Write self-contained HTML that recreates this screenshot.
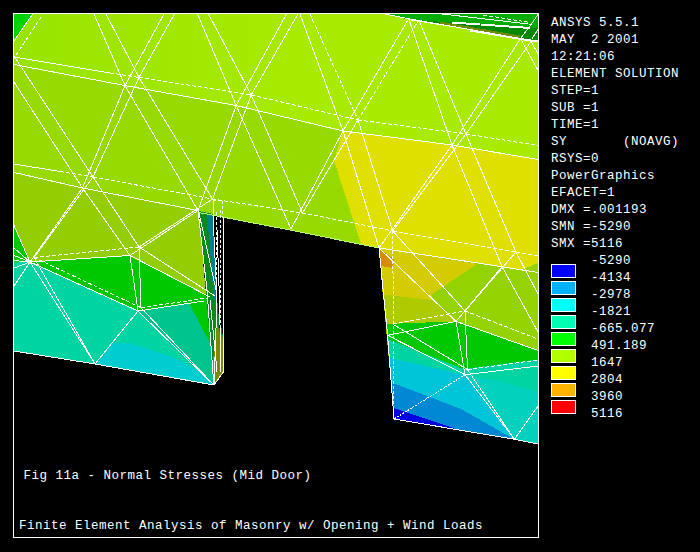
<!DOCTYPE html><html><head><meta charset="utf-8"><title>ANSYS plot</title>
<style>html,body{margin:0;padding:0;background:#000;}body{width:700px;height:552px;overflow:hidden;}svg{display:block}text{font-family:"Liberation Mono",monospace;font-size:12.5px;letter-spacing:0.5px;fill:#fff;white-space:pre}</style></head><body>
<svg width="700" height="552" viewBox="0 0 700 552">
<rect width="700" height="552" fill="#000"/>
<defs><clipPath id="c"><rect x="14" y="14" width="524" height="523"/></clipPath><linearGradient id="gT" gradientUnits="userSpaceOnUse" x1="14" y1="0" x2="300" y2="0"><stop offset="0" stop-color="#98e400"/><stop offset="1" stop-color="#a8ea00"/></linearGradient></defs>
<g clip-path="url(#c)" shape-rendering="crispEdges">
<polygon fill="url(#gT)" points="13,13 538,13 538,160 452,145 343,131 236,105 125,86 13,64"/>
<polygon fill="#96da00" points="13,64 125,86 236,105 343,131 452,145 538,160 538,273 379,248 198.8,212.5 198,210.5 13,172"/>
<polygon fill="#92ce02" points="13,172 198,210.5 198.8,212.5 213.8,385 95,364 13,351"/>
<polygon fill="#94d200" points="379,248 538,272 538,444.2 514.4,439.3 394,419"/>
<polygon fill="#e0e000" points="343,131 452,145 538,160 538,273 379,248 361.5,244.6 352.6,218 334,160.6"/>
<polygon fill="#d4cc00" points="379,248 477,264 431.6,294.4 432.5,300 382.7,294.4"/>
<polygon fill="#94d200" points="522,269.8 538,263 538,273"/>
<polygon fill="#d68c00" points="379,249 394,259 393,268 381,266"/>
<polygon fill="#008800" points="383,13 538,13 538,41 408,19.5"/>
<polygon fill="#00ac00" points="383,13 538,13 538,28 530,27.5 452,22.5 408,19.5"/>
<polygon fill="#6e8c00" points="440,21.5 520,35.5 520,38.5 440,24.5"/>
<polygon fill="#00d400" points="13,13 33,13 13,41.5"/>
<polygon fill="#00c800" points="13,225 30,262 13,300"/>
<polygon fill="#00c800" points="30,262 129,256 210,297 213,355 138,311"/>
<polygon fill="#00d4a2" points="13,262 30,262 138,311 189,303 213,355 213.8,385 95,364 13,351"/>
<polygon fill="#00c48e" points="138,311 189,303 211,345 213.8,385"/>
<polygon fill="#00cdd0" points="95,364 113,343 130,343 177,359 197,370 213.8,385"/>
<polygon fill="#aecb00" points="382.7,294.4 432.5,300 457,320.6 387.2,324.3"/>
<polygon fill="#00c800" points="386.3,324 456,321.4 538,350 538,444.2 514.4,439.3 394,419"/>
<polygon fill="#00d4a2" points="387.6,339 463,369 538,359.5 538,444.2 514.4,439.3 394,419"/>
<polygon fill="#00c4d8" points="390,358 465,375 500,381 538,398 538,444.2 514.4,439.3 394,419"/>
<polygon fill="#00d2be" points="465,375 538,366 538,444.2 514.4,439.3"/>
<polygon fill="#00d4a2" points="463,369 538,359.5 538,392 500,381 465,375"/>
<polygon fill="#0088d4" points="390.5,382 461,409 514.4,439.3 394,419"/>
<polygon fill="#0000e0" points="392.7,407.6 453.5,428 453.5,429.1 394,419"/>
<polygon fill="#0a8a1e" points="199,211 213,214 217,300 223.5,340 223.5,372 214,386"/>
<polygon fill="#007e8c" points="207,214.2 212.5,215 217,300 214,300"/>
<polygon fill="#000" points="214,216 223.5,217.5 223.5,300 220,335 217.5,300"/>
<polygon fill="#7a8a00" points="217,325 223.5,340 223.5,372 214,386 213,360"/>
<g stroke="#fff" stroke-width="1" fill="none">
<line x1="14" y1="64.5" x2="125" y2="85.6"/>
<line x1="125" y1="85.6" x2="236.2" y2="105.5"/>
<line x1="236.2" y1="105.5" x2="343" y2="131"/>
<line x1="343" y1="131" x2="452" y2="145"/>
<line x1="452" y1="145" x2="538" y2="159.5"/>
<line x1="14" y1="57" x2="110" y2="73"/>
<line x1="110" y1="73" x2="139" y2="77.4" stroke-dasharray="4 2"/>
<line x1="139" y1="77.4" x2="251.2" y2="94.9" stroke-dasharray="4 2"/>
<line x1="251.2" y1="94.9" x2="358" y2="120" stroke-dasharray="4 2"/>
<line x1="358" y1="120" x2="466" y2="134" stroke-dasharray="4 2"/>
<line x1="466" y1="134" x2="538" y2="145.5" stroke-dasharray="4 2"/>
<line x1="14" y1="172.5" x2="82.5" y2="188"/>
<line x1="82.5" y1="188" x2="198" y2="210.5"/>
<line x1="198.8" y1="212.5" x2="291" y2="230.2" stroke="#b4ff78"/>
<line x1="291" y1="230.2" x2="379" y2="248" stroke="#b4ff78"/>
<line x1="379" y1="248" x2="502" y2="266.7"/>
<line x1="502" y1="266.7" x2="538" y2="272.5"/>
<line x1="14" y1="164" x2="60" y2="171.5"/>
<line x1="60" y1="171.5" x2="93" y2="177" stroke-dasharray="4 2"/>
<line x1="93" y1="177" x2="212.5" y2="199" stroke-dasharray="4 2"/>
<line x1="212.5" y1="199" x2="302.5" y2="213" stroke-dasharray="4 2"/>
<line x1="302.5" y1="213" x2="392.7" y2="231" stroke-dasharray="4 2"/>
<line x1="392.7" y1="231" x2="515.9" y2="252" stroke-dasharray="4 2"/>
<line x1="515.9" y1="252" x2="538" y2="256" stroke-dasharray="4 2"/>
<line x1="94" y1="14" x2="125" y2="85.6"/>
<line x1="125" y1="85.6" x2="164" y2="14"/>
<line x1="197.5" y1="14" x2="236.2" y2="105.5"/>
<line x1="236.2" y1="105.5" x2="286.5" y2="14"/>
<line x1="300" y1="14" x2="343" y2="131"/>
<line x1="343" y1="131" x2="408.7" y2="18.7"/>
<line x1="408.7" y1="18.7" x2="452" y2="145"/>
<line x1="452" y1="145" x2="520.5" y2="38.5"/>
<line x1="106" y1="14" x2="139" y2="77.4"/>
<line x1="139" y1="77.4" x2="174.5" y2="14"/>
<line x1="208.5" y1="14" x2="251.2" y2="94.9"/>
<line x1="251.2" y1="94.9" x2="298" y2="14"/>
<line x1="310" y1="14" x2="358" y2="120" stroke-dasharray="4 2"/>
<line x1="358" y1="120" x2="418.8" y2="20" stroke-dasharray="4 2"/>
<line x1="418.8" y1="20" x2="466" y2="134"/>
<line x1="466" y1="134" x2="531" y2="41.5"/>
<line x1="14" y1="41" x2="33" y2="13.5"/>
<line x1="16" y1="55" x2="42.5" y2="15" stroke-dasharray="4 2"/>
<line x1="383" y1="13.5" x2="408.7" y2="18.7"/>
<line x1="408.7" y1="18.7" x2="520.5" y2="38.5"/>
<line x1="520.5" y1="38.5" x2="538" y2="41"/>
<line x1="470" y1="30.5" x2="520.5" y2="38.5"/>
<line x1="520.5" y1="38.5" x2="538" y2="41.5"/>
<line x1="470" y1="31" x2="520.5" y2="39.5"/>
<line x1="520.5" y1="39.5" x2="538" y2="42"/>
<line x1="408" y1="19.5" x2="452" y2="26.5"/>
<line x1="438" y1="13.5" x2="531" y2="24.3"/>
<line x1="452" y1="22" x2="530" y2="27.5"/>
<line x1="452" y1="23" x2="530" y2="28.5"/>
<line x1="483" y1="15" x2="530" y2="22.5" stroke-dasharray="4 2"/>
<line x1="520.5" y1="38.5" x2="530.7" y2="25.2"/>
<line x1="530.7" y1="25.2" x2="538.3" y2="13.8"/>
<line x1="520.5" y1="38.5" x2="538.3" y2="70.8"/>
<line x1="531" y1="41.5" x2="538.3" y2="54.4"/>
<line x1="532" y1="38.5" x2="538.3" y2="29"/>
<line x1="14" y1="82" x2="82.5" y2="188"/>
<line x1="82.5" y1="188" x2="125" y2="85.6"/>
<line x1="125" y1="85.6" x2="198" y2="210.5"/>
<line x1="198" y1="210.5" x2="236.2" y2="105.5"/>
<line x1="236.2" y1="105.5" x2="291" y2="229"/>
<line x1="291" y1="229" x2="343" y2="131"/>
<line x1="343" y1="131" x2="379" y2="248"/>
<line x1="379" y1="248" x2="452" y2="145"/>
<line x1="452" y1="145" x2="502" y2="266.7"/>
<line x1="14" y1="56" x2="93" y2="177"/>
<line x1="93" y1="177" x2="139" y2="77.4"/>
<line x1="139" y1="77.4" x2="212.5" y2="199"/>
<line x1="212.5" y1="199" x2="251.2" y2="94.9"/>
<line x1="251.2" y1="94.9" x2="302.5" y2="213"/>
<line x1="302.5" y1="213" x2="358" y2="120"/>
<line x1="358" y1="120" x2="392.7" y2="231"/>
<line x1="392.7" y1="231" x2="466" y2="134"/>
<line x1="466" y1="134" x2="515.9" y2="252"/>
<line x1="82.5" y1="188" x2="30" y2="262"/>
<line x1="93" y1="177" x2="34" y2="257.5"/>
<line x1="82.5" y1="188" x2="130" y2="255.5"/>
<line x1="93" y1="177" x2="139" y2="247"/>
<line x1="30" y1="262" x2="130" y2="255.5"/>
<line x1="34" y1="257.5" x2="139" y2="247" stroke-dasharray="4 2"/>
<line x1="130" y1="255.5" x2="198" y2="210.5"/>
<line x1="139" y1="247" x2="212.5" y2="199"/>
<line x1="130" y1="255.5" x2="210" y2="297"/>
<line x1="139" y1="247" x2="215" y2="296"/>
<line x1="130" y1="255.5" x2="138" y2="311"/>
<line x1="139" y1="247" x2="141" y2="307.7"/>
<line x1="30" y1="262" x2="14" y2="225.5"/>
<line x1="30" y1="262" x2="14" y2="248"/>
<line x1="30" y1="262" x2="14" y2="255.5"/>
<line x1="30" y1="262" x2="14" y2="260.5"/>
<line x1="30" y1="262" x2="14" y2="268"/>
<line x1="30" y1="262" x2="14" y2="286"/>
<line x1="30" y1="262" x2="95" y2="364"/>
<line x1="34" y1="257.5" x2="95" y2="364"/>
<line x1="95" y1="364" x2="138" y2="311"/>
<line x1="138" y1="311" x2="213.8" y2="385"/>
<line x1="141" y1="307.7" x2="213.8" y2="385"/>
<line x1="30" y1="262" x2="138" y2="311"/>
<line x1="34" y1="257.5" x2="141" y2="307.7" stroke-dasharray="4 2"/>
<line x1="138" y1="311" x2="204" y2="301"/>
<line x1="141" y1="307.7" x2="207" y2="298" stroke-dasharray="4 2"/>
<line x1="14" y1="351" x2="95" y2="364"/>
<line x1="95" y1="364" x2="213.8" y2="385"/>
<line x1="213.8" y1="385" x2="223.5" y2="372"/>
<line x1="223.5" y1="372" x2="223.5" y2="217"/>
<line x1="198" y1="210.5" x2="207" y2="290"/>
<line x1="207" y1="290" x2="213.8" y2="385"/>
<line x1="213" y1="200" x2="213" y2="215"/>
<line x1="213" y1="215" x2="217" y2="300"/>
<line x1="217" y1="300" x2="214" y2="386"/>
<line x1="220.5" y1="210" x2="220.5" y2="372" stroke-dasharray="3 2"/>
<line x1="213" y1="200" x2="222.7" y2="201" stroke-dasharray="3 2"/>
<line x1="222.7" y1="201" x2="223" y2="217" stroke-dasharray="3 2"/>
<line x1="198.8" y1="212.5" x2="217" y2="294"/>
<line x1="216.2" y1="212" x2="216.2" y2="300" stroke-dasharray="3 2"/>
<line x1="217" y1="230" x2="219.5" y2="300"/>
<line x1="219.5" y1="300" x2="221" y2="372"/>
<line x1="210" y1="300" x2="214" y2="340"/>
<line x1="214" y1="340" x2="217" y2="372"/>
<line x1="379" y1="248" x2="387.6" y2="335.4"/>
<line x1="387.6" y1="335.4" x2="394" y2="419"/>
<line x1="394" y1="419" x2="514.4" y2="439.3"/>
<line x1="514.4" y1="439.3" x2="538" y2="444"/>
<line x1="392.7" y1="231" x2="394" y2="408" stroke-dasharray="3 2"/>
<line x1="387.6" y1="335.4" x2="456" y2="321.4"/>
<line x1="392.7" y1="324" x2="465" y2="311" stroke-dasharray="4 2"/>
<line x1="387.6" y1="335.4" x2="465" y2="374.7"/>
<line x1="392.7" y1="324" x2="467.5" y2="369.6"/>
<line x1="456" y1="321.4" x2="465" y2="374.7"/>
<line x1="465" y1="311" x2="467.5" y2="369.6"/>
<line x1="465" y1="374.7" x2="394" y2="419" stroke-dasharray="2 1"/>
<line x1="465" y1="374.7" x2="514.4" y2="439.3"/>
<line x1="467.5" y1="369.6" x2="514.4" y2="439.3"/>
<line x1="465" y1="374.7" x2="538" y2="366"/>
<line x1="467.5" y1="369.6" x2="538" y2="360" stroke-dasharray="4 2"/>
<line x1="456" y1="321.4" x2="538" y2="350.5"/>
<line x1="465" y1="311" x2="538" y2="339" stroke-dasharray="4 2"/>
<line x1="379" y1="248" x2="456" y2="321.4"/>
<line x1="392.7" y1="231" x2="465" y2="311"/>
<line x1="502" y1="266.7" x2="456" y2="321.4"/>
<line x1="515.9" y1="252" x2="465" y2="311"/>
<line x1="502" y1="266.7" x2="538" y2="332"/>
<line x1="515.9" y1="252" x2="538" y2="294"/>
<line x1="514.4" y1="439.3" x2="538" y2="406"/>
</g></g>
<rect x="13.5" y="13.5" width="525" height="524" fill="none" stroke="#fff" stroke-width="1" shape-rendering="crispEdges"/>
<text x="551" y="26" xml:space="preserve">ANSYS 5.5.1</text>
<text x="551" y="43" xml:space="preserve">MAY  2 2001</text>
<text x="551" y="60" xml:space="preserve">12:21:06</text>
<text x="551" y="77" xml:space="preserve">ELEMENT SOLUTION</text>
<text x="551" y="94" xml:space="preserve">STEP=1</text>
<text x="551" y="111" xml:space="preserve">SUB =1</text>
<text x="551" y="128" xml:space="preserve">TIME=1</text>
<text x="551" y="145" xml:space="preserve">SY       (NOAVG)</text>
<text x="551" y="162" xml:space="preserve">RSYS=0</text>
<text x="551" y="179" xml:space="preserve">PowerGraphics</text>
<text x="551" y="196" xml:space="preserve">EFACET=1</text>
<text x="551" y="213" xml:space="preserve">DMX =.001193</text>
<text x="551" y="230" xml:space="preserve">SMN =-5290</text>
<text x="551" y="247" xml:space="preserve">SMX =5116</text>
<text x="551" y="264" xml:space="preserve">     -5290</text>
<text x="551" y="281" xml:space="preserve">     -4134</text>
<text x="551" y="298" xml:space="preserve">     -2978</text>
<text x="551" y="315" xml:space="preserve">     -1821</text>
<text x="551" y="332" xml:space="preserve">     -665.077</text>
<text x="551" y="349" xml:space="preserve">     491.189</text>
<text x="551" y="366" xml:space="preserve">     1647</text>
<text x="551" y="383" xml:space="preserve">     2804</text>
<text x="551" y="400" xml:space="preserve">     3960</text>
<text x="551" y="417" xml:space="preserve">     5116</text>
<rect x="551.5" y="264.5" width="24" height="13" fill="#0000ff" stroke="#fff" stroke-width="1" shape-rendering="crispEdges"/>
<rect x="551.5" y="281.5" width="24" height="13" fill="#00b2ff" stroke="#fff" stroke-width="1" shape-rendering="crispEdges"/>
<rect x="551.5" y="298.5" width="24" height="13" fill="#00ffff" stroke="#fff" stroke-width="1" shape-rendering="crispEdges"/>
<rect x="551.5" y="315.5" width="24" height="13" fill="#00ffb2" stroke="#fff" stroke-width="1" shape-rendering="crispEdges"/>
<rect x="551.5" y="332.5" width="24" height="13" fill="#00ff00" stroke="#fff" stroke-width="1" shape-rendering="crispEdges"/>
<rect x="551.5" y="349.5" width="24" height="13" fill="#b2ff00" stroke="#fff" stroke-width="1" shape-rendering="crispEdges"/>
<rect x="551.5" y="366.5" width="24" height="13" fill="#ffff00" stroke="#fff" stroke-width="1" shape-rendering="crispEdges"/>
<rect x="551.5" y="383.5" width="24" height="13" fill="#ffb200" stroke="#fff" stroke-width="1" shape-rendering="crispEdges"/>
<rect x="551.5" y="400.5" width="24" height="13" fill="#ff0000" stroke="#fff" stroke-width="1" shape-rendering="crispEdges"/>
<text x="23.5" y="479" xml:space="preserve">Fig 11a - Normal Stresses (Mid Door)</text>
<text x="19" y="529" xml:space="preserve">Finite Element Analysis of Masonry w/ Opening + Wind Loads</text>
</svg></body></html>
